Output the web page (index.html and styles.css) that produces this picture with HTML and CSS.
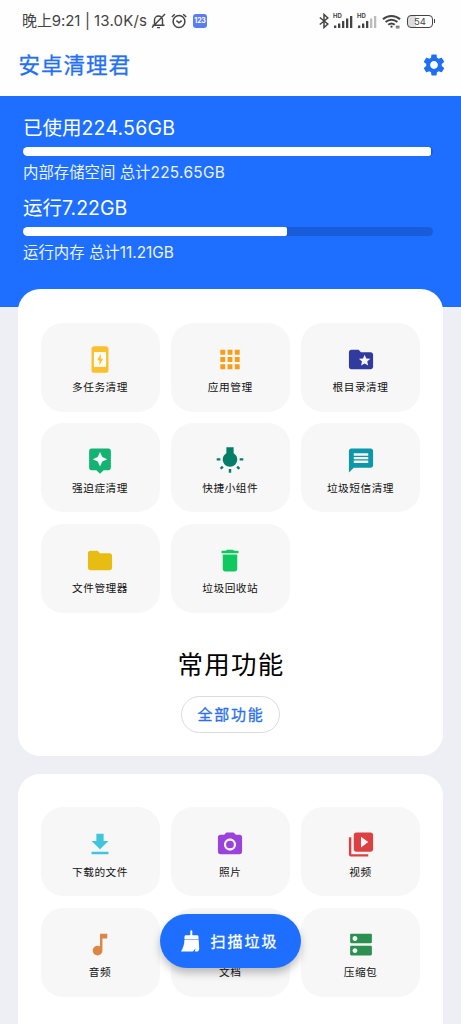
FILE: index.html
```
<!DOCTYPE html>
<html lang="zh-CN">
<head>
<meta charset="utf-8">
<title>安卓清理君</title>
<link rel="stylesheet" href="styles.css">
</head>
<body>
<div class="screen">
  <header class="status">
    <span class="clock">晚上9:21</span><span class="sep">|</span><span class="speed">13.0K/s</span>
    <svg class="bell" viewBox="0 0 16 16" fill="none" stroke="#444" stroke-width="1.4"><path d="M4 12V7a4 4 0 0 1 8 0v5M2 12.3h12M6.5 14.6h3M14.5 1L1.5 14.5"/></svg>
    <svg class="alarm" viewBox="0 0 16 16" fill="none" stroke="#444" stroke-width="1.5"><circle cx="8" cy="8.5" r="5.9"/><path d="M5.4 7.6L8 9.8l2.6-2.200M.8 4l3-2.800M15.200 4l-3-2.800"/></svg>
    <span class="badge">123</span>
    <span class="space"></span>
    <svg class="bt" viewBox="0 0 10 16" fill="none" stroke="#444" stroke-width="1.5"><path d="M.8 4.5L8.8 11 5 14.5v-13L8.8 5 .8 11.5"/></svg>
    <span class="signal"><b>HD</b><svg viewBox="0 0 20 14" fill="#444"><path d="M1 11.5h2.3V14H1zM5 9.5h2.3V14H5zM9 7h2.3v7H9zM13 4.5h2.3V14H13zM17 2h2.3v12H17z"/></svg></span>
    <span class="signal"><b>HD</b><svg viewBox="0 0 20 14" fill="#444"><path d="M1 11.5h2.3V14H1zM5 9.5h2.3V14H5zM9 7h2.3v7H9z"/><path fill="#bbb" d="M13 4.5h2.3V14H13zM17 2h2.3v12H17z"/></svg></span>
    <svg class="wifi" viewBox="0 0 20 15" fill="none" stroke="#444" stroke-width="2.1"><path d="M1 5.2c5-4.7 13-4.7 18 0M3.8 8.1c3.6-3.3 8.8-3.3 12.4 0M6.6 11c2-1.7 4.8-1.7 6.8 0"/><circle cx="10" cy="13" r="1.2" fill="#444" stroke="none"/><path stroke-width="1" d="M14.500 12.5h4M14.500 14.2h4"/></svg>
    <span class="battery">54</span>
  </header>
  <div class="appbar">
    <h1>安卓清理君</h1>
    <svg class="gear" viewBox="0 0 24 24" fill="#1f6ff5"><path d="M19.14 12.94c.04-.3.06-.61.06-.94 0-.32-.02-.64-.07-.94l2.03-1.58c.18-.14.23-.41.12-.61l-1.92-3.32c-.12-.22-.37-.29-.59-.22l-2.39.96c-.5-.38-1.03-.7-1.62-.94l-.36-2.54c-.04-.24-.24-.41-.48-.41h-3.84c-.24 0-.43.17-.47.41l-.36 2.54c-.59.24-1.13.57-1.62.94l-2.39-.96c-.22-.08-.47 0-.59.22L2.74 8.87c-.12.21-.08.47.12.61l2.03 1.58c-.05.3-.09.63-.09.94s.02.64.07.94l-2.03 1.58c-.18.14-.23.41-.12.61l1.92 3.32c.12.22.37.29.59.22l2.39-.96c.5.38 1.03.7 1.62.94l.36 2.54c.05.24.24.41.48.41h3.84c.24 0 .44-.17.47-.41l.36-2.54c.59-.24 1.13-.56 1.62-.94l2.39.96c.22.08.47 0 .59-.22l1.92-3.32c.12-.22.07-.47-.12-.61l-2.01-1.58zM12 15.6c-1.98 0-3.6-1.62-3.6-3.6s1.62-3.6 3.6-3.6 3.6 1.62 3.6 3.6-1.62 3.6-3.6 3.6z"/></svg>
  </div>
  <section class="usage">
    <div class="big">已使用<span class="num">224.56GB</span></div>
    <div class="track"><div class="fill" style="width:99.6%"></div></div>
    <div class="small">内部存储空间 总计<span class="num">225.65GB</span></div>
    <div class="big">运行7.22GB</div>
    <div class="track"><div class="fill" style="width:64.5%"></div></div>
    <div class="small">运行内存 总计11.21GB</div>
  </section>
  <section class="card first">
    <div class="grid">
      <div class="tile"><svg viewBox="0 0 24 24" fill="#fbc02d"><path d="M17 1H7c-1.1 0-2 .9-2 2v18c0 1.1.9 2 2 2h10c1.1 0 2-.9 2-2V3c0-1.1-.9-2-2-2zm0 17H7V6h10v12z"/><path d="M7 6h10v12H7z" fill="#fffdf5"/><path d="M12.6 7.2L9.6 12.7h1.9v4.1l3-5.5h-1.9z"/></svg>多任务清理</div>
      <div class="tile"><svg viewBox="0 0 24 24" fill="#f99d16"><path d="M4 8h4V4H4v4zm6 12h4v-4h-4v4zm-6 0h4v-4H4v4zm0-6h4v-4H4v4zm6 0h4v-4h-4v4zm6-10v4h4V4h-4zm-6 4h4V4h-4v4zm6 6h4v-4h-4v4zm0 6h4v-4h-4v4z"/></svg>应用管理</div>
      <div class="tile"><svg viewBox="0 0 24 24" fill="#303a9f"><path d="M20 6h-8l-2-2H4c-1.1 0-1.99.9-1.99 2L2 18c0 1.1.9 2 2 2h16c1.1 0 2-.9 2-2V8c0-1.1-.9-2-2-2zm-2.06 11L15 15.28 12.06 17l.78-3.33-2.59-2.24 3.41-.29L15 8l1.34 3.14 3.41.29-2.59 2.24.78 3.33z"/></svg>根目录清理</div>
      <div class="tile"><svg viewBox="0 0 24 24" fill="#13b373"><path d="M19 2H5c-1.1 0-2 .9-2 2v14c0 1.1.9 2 2 2h4l3 3 3-3h4c1.1 0 2-.9 2-2V4c0-1.1-.9-2-2-2zm-5.12 10.88L12 17l-1.88-4.12L6 11l4.12-1.88L12 5l1.88 4.12L18 11l-4.12 1.88z"/></svg>强迫症清理</div>
      <div class="tile"><svg viewBox="0 0 24 24" fill="#047d69"><path d="M3.55 18.54l1.41 1.41 1.79-1.8-1.41-1.41-1.79 1.8zM11 22.45h2V19.5h-2v2.95zM4 10.5H1v2h3v-2zm11-4.19V1.5H9v4.81C7.21 7.35 6 9.28 6 11.5c0 3.31 2.69 6 6 6s6-2.69 6-6c0-2.22-1.21-4.15-3-5.19zm5 4.19v2h3v-2h-3zm-2.76 7.66l1.79 1.8 1.41-1.41-1.8-1.79-1.4 1.4z" transform="translate(0 -.4)"/></svg>快捷小组件</div>
      <div class="tile"><svg viewBox="0 0 24 24" fill="#0c98a8"><path d="M20 2H4c-1.1 0-1.99.9-1.99 2L2 22l4-4h14c1.1 0 2-.9 2-2V4c0-1.1-.9-2-2-2zm-2 12H6v-2h12v2zm0-3H6V9h12v2zm0-3H6V6h12v2z"/></svg>垃圾短信清理</div>
      <div class="tile"><svg viewBox="0 0 24 24" fill="#e8bd13"><path d="M10 4H4c-1.1 0-1.99.9-1.99 2L2 18c0 1.1.9 2 2 2h16c1.1 0 2-.9 2-2V8c0-1.1-.9-2-2-2h-8l-2-2z"/></svg>文件管理器</div>
      <div class="tile"><svg viewBox="0 0 24 24" fill="#0fc95f"><path d="M6 19c0 1.1.9 2 2 2h8c1.1 0 2-.9 2-2V7H6v12zM19 4h-3.5l-1-1h-5l-1 1H5v2h14V4z"/></svg>垃圾回收站</div>
    </div>
    <h2>常用功能</h2>
    <button class="all">全部功能</button>
  </section>
  <section class="card second">
    <div class="grid">
      <div class="tile"><svg viewBox="0 0 24 24" fill="#40c6dc"><path d="M19 9h-4V3H9v6H5l7 7 7-7zM5 18v2h14v-2H5z"/></svg>下载的文件</div>
      <div class="tile"><svg viewBox="0 0 24 24" fill="#9c42dc"><circle cx="12" cy="12" r="3.2"/><path d="M9 2L7.170 4H4c-1.100 0-2 .9-2 2v12c0 1.100.9 2 2 2h16c1.100 0 2-.9 2-2V6c0-1.100-.9-2-2-2h-3.170L15 2H9zm3 15c-2.760 0-5-2.240-5-5s2.240-5 5-5 5 2.240 5 5-2.240 5-5 5z"/></svg>照片</div>
      <div class="tile"><svg viewBox="0 0 24 24" fill="#dd4042"><path d="M4 6H2v14c0 1.100.9 2 2 2h14v-2H4V6zm16-4H8c-1.100 0-2 .9-2 2v12c0 1.100.9 2 2 2h12c1.100 0 2-.9 2-2V4c0-1.100-.9-2-2-2zm-8 12.500v-9l6 4.500-6 4.500z"/></svg>视频</div>
      <div class="tile"><svg viewBox="0 0 24 24" fill="#dc8545"><path d="M12 3v10.550c-.59-.34-1.270-.55-2-.55-2.210 0-4 1.790-4 4s1.790 4 4 4 4-1.790 4-4V7h4V3h-6z"/></svg>音频</div>
      <div class="tile"><svg viewBox="0 0 24 24" fill="#4285f4"><path d="M14 2H6c-1.100 0-2 .9-2 2v16c0 1.100.9 2 2 2h12c1.100 0 2-.9 2-2V8l-6-6zm2 16H8v-2h8v2zm0-4H8v-2h8v2zm-3-5V3.500L18.500 9H13z"/></svg>文档</div>
      <div class="tile"><svg viewBox="0 0 24 24" fill="#2c9150"><path d="M20 13H4c-.55 0-1 .45-1 1v6c0 .55.45 1 1 1h16c.55 0 1-.45 1-1v-6c0-.55-.45-1-1-1zM7 19c-1.100 0-2-.9-2-2s.9-2 2-2 2 .9 2 2-.9 2-2 2zM20 3H4c-.55 0-1 .45-1 1v6c0 .55.45 1 1 1h16c.55 0 1-.45 1-1V4c0-.55-.45-1-1-1zM7 9c-1.100 0-2-.9-2-2s.9-2 2-2 2 .9 2 2-.9 2-2 2z"/></svg>压缩包</div>
    </div>
  </section>
  <button class="fab">
    <svg viewBox="0 0 20 22" fill="#fff"><path d="M10.300 1.200a1 1 0 0 1 2 0V5.300h4.700c1 0 1.500.6 1.500 1.500V9h-14V6.800c0-.9.500-1.500 1.500-1.500h4.300zM4.500 9.600h14.200l.5 8.900c0 1.600-.8 3-1.900 3h-2.600l1-3.300-2.800 3.300H1c2-3 3.300-6.500 3.500-11.900z"/></svg>
    <span>扫描垃圾</span>
  </button>
</div>
</body>
</html>
```

FILE: styles.css
```
* { box-sizing: border-box; }
body {
  margin: 0;
  background: #edeff4;
  font-family: Inter, "Noto Sans CJK SC", sans-serif;
}
h1, h2 { margin: 0; font-weight: 400; }
svg { display: block; flex: none; }
button { font-family: inherit; padding: 0; }
.screen {
  position: relative;
  height: 1024px;
  overflow: hidden;
}
.status {
  height: 42px;
  background: #fefefe;
  display: flex;
  align-items: center;
  padding: 0 26px 0 22px;
  font-size: 15px;
  line-height: 20px;
  color: #444;
  white-space: nowrap;
}
.clock { width: 59px; letter-spacing: -.1px; }
.sep { width: 13px; text-align: center; }
.speed { width: 56px; letter-spacing: .2px; }
.bell { width: 17px; height: 16px; }
.alarm { width: 16px; height: 16px; margin-left: 4px; }
.badge {
  width: 14px;
  height: 14px;
  margin-left: 6px;
  border-radius: 3px;
  background: #5b7df2;
  color: #fff;
  font-size: 7px;
  font-weight: 700;
  line-height: 14px;
  text-align: center;
  letter-spacing: -.2px;
}
.space { flex: 1; }
.bt { width: 10px; height: 16px; margin-right: 4px; }
.signal {
  width: 21.500px;
  height: 14px;
  margin-right: 2.500px;
  display: grid;
}
.signal b, .signal svg { grid-area: 1 / 1; }
.signal b { font-size: 6px; line-height: 4px; }
.signal svg { width: 20px; height: 14px; }
.wifi { width: 19px; height: 15px; margin: 0 6px 0 1px; }
.battery {
  position: relative;
  width: 26px;
  height: 13px;
  margin-right: 2px;
  border: 1.500px solid #444;
  border-radius: 4px;
  background: linear-gradient(90deg, #ddd 35%, #fff 35%);
  font-size: 9.500px;
  line-height: 11px;
  text-align: center;
}
.battery::after {
  content: "";
  position: absolute;
  right: -3px;
  top: 3px;
  width: 1.500px;
  height: 4px;
  background: #444;
}
.appbar {
  height: 54px;
  background: #fefefe;
  display: flex;
  justify-content: space-between;
  padding: 9px 14px 0 18.500px;
}
.appbar h1 {
  font-size: 21.500px;
  line-height: 28px;
  letter-spacing: 1px;
  color: #2370f2;
  -webkit-text-stroke: .3px #2370f2;
}
.gear { width: 26px; height: 26px; margin-top: 1px; }
.usage {
  height: 211px;
  padding: 17px 28px 0 23px;
  background: #1e6fff;
  color: #fff;
}
.big { height: 33.500px; font-size: 19.500px; line-height: 30px; }
.num { letter-spacing: .2px; }
.small { height: 20px; margin: 7px 0 10.500px; font-size: 15.400px; line-height: 20px; color: #edf3ff; }
.small .num { letter-spacing: .3px; }
.track { height: 9px; border-radius: 5px; background: #185cd9; overflow: hidden; }
.fill { height: 100%; background: #fff; border-radius: 0 2px 2px 0; }
.card {
  margin: 0 18px;
  padding: 33.500px 22.500px 0;
  background: #fff;
  border-radius: 22px;
}
.first {
  height: 467px;
  margin-top: -18px;
  display: flex;
  flex-direction: column;
  align-items: flex-start;
}
.second { height: 300px; margin-top: 17.500px; }
.grid {
  width: 380px;
  display: grid;
  grid-template-columns: repeat(3, 119px);
  grid-auto-rows: 89px;
  gap: 11.500px 11.250px;
}
.tile {
  padding-top: 22.500px;
  border-radius: 22px;
  background: #f7f7f7;
  display: flex;
  flex-direction: column;
  align-items: center;
  font-size: 10.700px;
  line-height: 16px;
  letter-spacing: .5px;
  color: #111;
}
.tile svg { width: 30px; height: 29px; margin-bottom: 6px; }
.first h2 {
  align-self: center;
  margin-top: 32px;
  padding-left: 1px;
  font-size: 25.500px;
  line-height: 40px;
  letter-spacing: 1.200px;
  color: #000;
}
.all {
  align-self: center;
  width: 99px;
  height: 37px;
  margin-top: 11px;
  padding: 0 0 1px 1px;
  border: 1px solid #d9dcdf;
  border-radius: 19px;
  background: #fff;
  color: #2a6fec;
  font-size: 15px;
  letter-spacing: 1.800px;
  -webkit-text-stroke: .3px #2a6fec;
}
.fab {
  position: absolute;
  left: 160px;
  top: 914px;
  width: 141px;
  height: 54px;
  border: 0;
  border-radius: 27px;
  background: #1e6fff;
  box-shadow: 0 5px 8px rgba(0, 0, 0, .25);
  color: #fff;
  display: flex;
  align-items: center;
  padding: 0 0 1px 20px;
  gap: 10.500px;
  font-size: 15px;
  letter-spacing: 2px;
  -webkit-text-stroke: .3px #fff;
}
.fab svg { width: 20px; height: 22px; }
```
